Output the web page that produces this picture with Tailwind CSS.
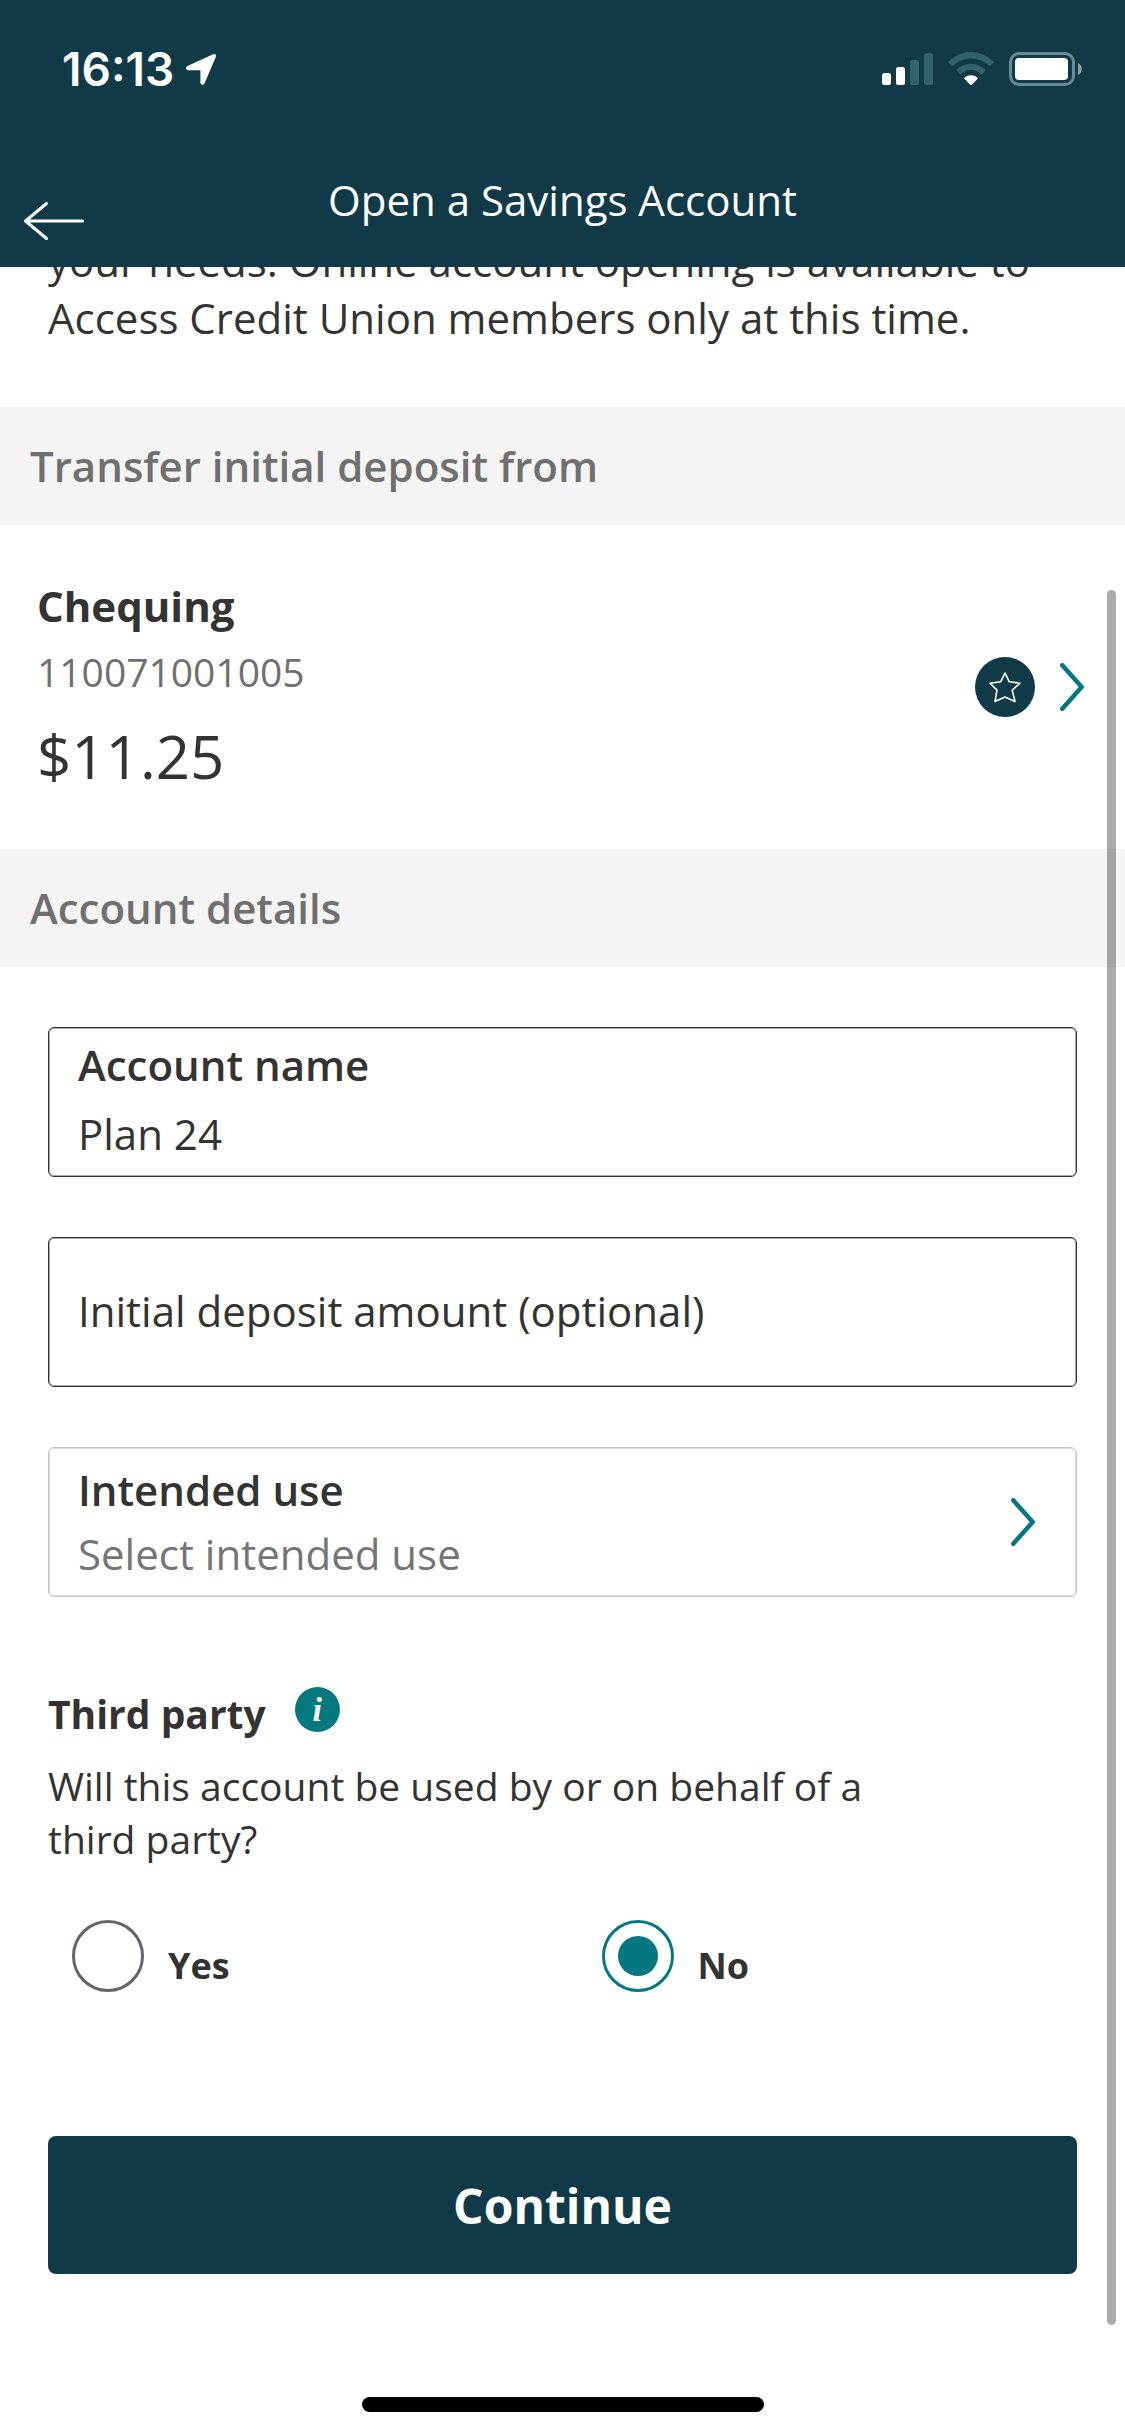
<!DOCTYPE html>
<html lang="en">
  <head>
    <meta charset="UTF-8" />
    <meta name="viewport" content="width=device-width, initial-scale=1.0" />
    <title>Open a Savings Account</title>
    <script src="https://cdn.jsdelivr.net/npm/@tailwindcss/browser@4"></script>
  </head>
  <body class="bg-white text-[#333] font-['Open_Sans',sans-serif] text-[42px] leading-[57px]">
    <div class="relative flex flex-col min-h-screen overflow-hidden">
      <header class="relative z-10 bg-[#113a48] text-white">
        <!-- status bar -->
        <div class="flex items-center justify-between h-[138px] pl-[62px] pr-[42px]">
          <div class="flex items-center gap-3">
            <span class="font-['Inter',sans-serif] font-semibold text-[46px]">16:13</span>
            <svg class="w-[30px] h-[31px]" viewBox="0 0 30 31" fill="currentColor">
              <path d="M27.2 0.3 1.5 12.1C-0.7 13.2-0.2 16.2 2.2 16.2H13.6c.5 0 .8.3.8.8V28.5c0 2.5 3 3 4.2.7L29.7 3.2C30.6 1.2 29.2-.5 27.2.3Z" />
            </svg>
          </div>
          <div class="flex items-center gap-[15px]">
            <svg class="w-[51px] h-[34px]" viewBox="0 0 51 34">
              <rect x="0" y="21" width="9" height="12" rx="2.5" fill="#fff" />
              <rect x="14" y="15" width="9" height="18" rx="2.5" fill="#fff" />
              <rect x="28" y="8" width="9" height="25" rx="2.5" fill="#33616d" />
              <rect x="42" y="1" width="9" height="32" rx="2.5" fill="#33616d" />
            </svg>
            <svg class="w-[46px] h-[34px]" viewBox="0 0 46 34">
              <path d="M0.6 9.4a31.5 31.5 0 0 1 44.8 0c.5.5.5 1 0 1.5l-2.9 2.9c-.5.5-1 .5-1.5 0a25.6 25.6 0 0 0-36 0c-.5.5-1 .5-1.5 0L.6 10.9c-.5-.5-.5-1 0-1.5Z" fill="#33616d" />
              <path d="M8.9 17.5a20 20 0 0 1 28.2 0c.5.5.5 1 0 1.5l-3 3c-.5.5-1 .5-1.5 0a13.8 13.8 0 0 0-19.2 0c-.5.5-1 .5-1.5 0l-3-3c-.5-.5-.5-1 0-1.5Z" fill="#33616d" />
              <path d="M16.7 25.6a9.5 9.5 0 0 1 12.6 0c.6.5.6 1 .1 1.5l-5.6 5.6c-.5.5-1.1.5-1.6 0l-5.6-5.6c-.5-.5-.5-1 .1-1.5Z" fill="#fff" />
            </svg>
            <svg class="w-[74px] h-[34px]" viewBox="0 0 74 34">
              <rect x="1.5" y="1.5" width="63" height="31" rx="8.5" fill="none" stroke="#6c8a93" stroke-width="3" />
              <rect x="6" y="6" width="53" height="22" rx="4" fill="#fff" />
              <path d="M69 11c5 2 5 10 0 12Z" fill="#89a0a6" />
            </svg>
          </div>
        </div>
        <!-- title bar -->
        <div class="grid grid-cols-[1fr_auto_1fr] items-start h-[129px] px-6">
          <button class="mt-16 w-[60px] h-[38px]" aria-label="Back">
            <svg viewBox="0 0 60 38" fill="none" stroke="currentColor" stroke-width="3" stroke-linecap="round" stroke-linejoin="round">
              <path d="M58.5 19H1.500M22.500 1.500 1.500 19l21 17.500" />
            </svg>
          </button>
          <h1 class="mt-[33px]">Open a Savings Account</h1>
        </div>
      </header>

      <main class="flex-1 -mt-[35px]">
        <p class="px-12 pb-[61px]">your needs. Online account opening is available to Access Credit Union members only at this time.</p>

        <h2 class="flex items-center h-[118px] px-[30px] pb-0.5 bg-[#f4f4f4] text-[#6f6f6f] font-semibold">Transfer initial deposit from</h2>
        <a href="#" class="flex items-center justify-between pl-[37px] pr-[41px] py-[52px]">
          <div>
            <div class="font-bold">Chequing</div>
            <div class="mt-[11px] text-[39px] leading-[53px] text-[#6f6f6f]">110071001005</div>
            <div class="mt-[17px] text-[60px] leading-[82px]">$11.25</div>
          </div>
          <div class="flex items-center gap-[25px]">
            <svg class="w-[60px] h-[60px]" viewBox="0 0 60 60">
              <circle cx="30" cy="30" r="30" fill="#113a48" />
              <path d="M30 16l4.200 8.700 10.800 1.500-7.800 6.900 2.800 11.400-10-4.500-10 4.500 2-11.400-7-6.900 10.800-1.500Z" fill="none" stroke="#fff" stroke-width="1.600" stroke-linejoin="round" />
            </svg>
            <svg class="w-6 h-12" viewBox="0 0 24 48" fill="none" stroke="#03787f" stroke-width="4.500" stroke-linecap="round" stroke-linejoin="round">
              <path d="M2.300 2.300 21.700 24 2.300 45.700" />
            </svg>
          </div>
        </a>

        <h2 class="flex items-center h-[118px] px-[30px] pb-0.5 bg-[#f4f4f4] text-[#6f6f6f] font-semibold">Account details</h2>
        <form class="px-12 pt-[60px]">
          <div class="h-[150px] px-[29px] pt-2 border border-[#333] rounded-md shadow-[inset_0_0_0_1px_#aaa]">
            <label for="account_name" class="block font-semibold">Account name</label>
            <input id="account_name" type="text" value="Plan 24" class="block w-full h-[57px] mt-3 outline-none" />
          </div>

          <div class="flex items-center h-[150px] mt-[60px] px-[29px] pb-1 border border-[#333] rounded-md shadow-[inset_0_0_0_1px_#aaa]">
            <input
              id="deposit_amount"
              type="text"
              aria-label="Initial deposit amount (optional)"
              placeholder="Initial deposit amount (optional)"
              class="w-full h-[57px] outline-none placeholder:text-[#333]"
            />
          </div>

          <div class="flex items-center h-[150px] mt-[60px] pl-[29px] pr-[41px] border border-[#c4c4c4] rounded-md shadow-[inset_0_0_0_1px_#e0e0e0]">
            <div class="flex-1 pb-0.5">
              <label for="intended_use" class="block font-semibold">Intended use</label>
              <select id="intended_use" class="block w-full h-[57px] mt-[7px] appearance-none text-[#757575] outline-none">
                <option>Select intended use</option>
              </select>
            </div>
            <svg class="w-6 h-12" viewBox="0 0 24 48" fill="none" stroke="#03787f" stroke-width="4.500" stroke-linecap="round" stroke-linejoin="round">
              <path d="M2.300 2.300 21.700 24 2.300 45.700" />
            </svg>
          </div>

          <fieldset class="mt-[90px] text-[39px] leading-[53px]" aria-labelledby="third_party">
            <div class="flex items-start gap-[29px]">
              <h3 id="third_party" class="font-bold">Third party</h3>
              <button
                type="button"
                aria-label="About third parties"
                class="flex items-center justify-center w-[45px] h-[45px] rounded-full bg-[#03787f] text-white font-['Liberation_Serif',serif] font-bold italic text-[34px] leading-[45px]"
              >
                i
              </button>
            </div>
            <p class="w-5/6 mt-[19px]">Will this account be used by or on behalf of a third party?</p>
            <div class="grid grid-cols-2 gap-[30px] mt-[55px] font-bold text-[36px] leading-[52px]">
              <label class="flex items-end gap-6 pl-6">
                <input type="radio" name="third_party" value="yes" class="appearance-none w-[72px] h-[72px] rounded-full border-3 border-[#63666a] checked:border-[#03787f]" />
                Yes
              </label>
              <label class="flex items-end gap-6 pl-6">
                <input
                  type="radio"
                  name="third_party"
                  value="no"
                  checked
                  class="appearance-none grid place-items-center w-[72px] h-[72px] rounded-full border-3 border-[#63666a] checked:border-[#03787f] checked:before:block checked:before:w-10 checked:before:h-10 checked:before:rounded-full checked:before:bg-[#03787f]"
                />
                No
              </label>
            </div>
          </fieldset>

          <button type="submit" class="w-full h-[138px] mt-36 rounded-lg bg-[#113a48] text-white font-bold text-[48px]">Continue</button>
        </form>
      </main>

      <!-- home indicator -->
      <div class="self-center w-[402px] h-[15px] mt-[123px] mb-6 rounded-full bg-black"></div>

      <!-- scroll thumb -->
      <div class="absolute right-[9px] top-[590px] bottom-[111px] w-[9px] rounded-full bg-black/33"></div>
    </div>
  </body>
</html>
